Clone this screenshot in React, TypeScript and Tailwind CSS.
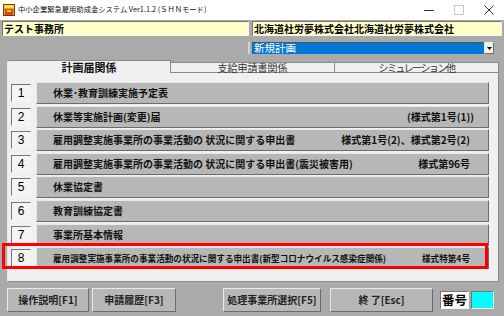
import React from "react";

const raised =
  "border border-t-[#e9e9e9] border-l-[#e9e9e9] border-r-[#6c6c6c] border-b-[#6c6c6c]";
const sunken =
  "border border-t-[#767676] border-l-[#767676] border-r-[#f6f6f6] border-b-[#f6f6f6]";

type RowData = { n: string; label: string; right?: string; small?: boolean; pr?: string };

const rows: RowData[] = [
  { n: "1", label: "休業･教育訓練実施予定表" },
  { n: "2", label: "休業等実施計画(変更)届", right: "(様式第1号(1))", pr: "pr-[14px]" },
  { n: "3", label: "雇用調整実施事業所の事業活動の 状況に関する申出書", right: "様式第1号(2)、様式第2号(2)" },
  { n: "4", label: "雇用調整実施事業所の事業活動の 状況に関する申出書(震災被害用)", right: "様式第96号" },
  { n: "5", label: "休業協定書" },
  { n: "6", label: "教育訓練協定書" },
  { n: "7", label: "事業所基本情報" },
  {
    n: "8",
    label: "雇用調整実施事業所の事業活動の状況に関する申出書(新型コロナウイルス感染症関係)",
    right: "様式特第4号",
    small: true,
  },
];

function Row({ r }: { r: RowData }) {
  return (
    <div className="flex items-center h-[22px]">
      <div
        className={`ml-[3px] w-[20px] h-[18px] bg-[#f4f4f4] ${sunken} flex items-center justify-center text-[12px] leading-none font-['Liberation_Sans',sans-serif]`}
      >
        {r.n}
      </div>
      <div
        className={`ml-[5px] w-[453px] h-[22px] bg-[#b7b7b7] ${raised} flex items-center justify-between pl-[16px] ${
          r.pr ?? "pr-[18px]"
        } font-bold leading-none text-[#111] ${r.small ? "text-[8.6px]" : "text-[10px]"}`}
      >
        <span className="whitespace-pre">{r.label}</span>
        {r.right && <span className="whitespace-pre">{r.right}</span>}
      </div>
    </div>
  );
}

function BottomButton({ w, ml, children }: { w: string; ml: string; children: React.ReactNode }) {
  return (
    <div
      className={`${w} ${ml} h-[24px] bg-[#b7b7b7] ${raised} flex items-center justify-center text-[10px] font-bold leading-none text-[#222] whitespace-pre`}
    >
      {children}
    </div>
  );
}

export default function App() {
  return (
    <div className="relative w-[504px] h-[316px] overflow-hidden bg-[#aaaaaa] font-['Noto_Sans_CJK_JP',sans-serif] text-black">
      {/* title bar */}
      <div className="h-[20px] bg-white flex items-center">
        <svg className="ml-[3px]" width="12" height="12" viewBox="0 0 12 12">
          <rect x="0.5" y="0.5" width="11" height="11" fill="#f2a020" stroke="#6b3a10" />
          <rect x="1" y="1" width="10" height="3" fill="#f6e040" />
          <rect x="2" y="5" width="8" height="6" fill="#d9480f" />
          <rect x="4" y="6" width="4" height="2" fill="#f8c060" />
        </svg>
        <span className="ml-[3px] text-[7.3px] leading-none text-[#111] whitespace-pre">
          中小企業緊急雇用助成金システム Ver1.1.2 (ＳＨＮモード)
        </span>
        <div className="ml-auto flex h-full">
          <div className="w-[30px] flex items-center justify-center">
            <svg width="10" height="10" viewBox="0 0 10 10">
              <line x1="0" y1="5.5" x2="10" y2="5.5" stroke="#333" strokeWidth="1" />
            </svg>
          </div>
          <div className="w-[30px] flex items-center justify-center">
            <svg width="10" height="10" viewBox="0 0 10 10">
              <rect x="0.5" y="0.5" width="9" height="9" fill="none" stroke="#c4c4c4" strokeWidth="1" />
            </svg>
          </div>
          <div className="w-[30px] flex items-center justify-center">
            <svg width="10" height="10" viewBox="0 0 10 10">
              <path d="M0.5 0.5 L9.5 9.5 M9.5 0.5 L0.5 9.5" stroke="#333" strokeWidth="1" />
            </svg>
          </div>
        </div>
      </div>

      {/* yellow fields */}
      <div className="mt-[1px] flex h-[15px]">
        <div
          className={`ml-[2px] w-[247px] bg-[#ffffc8] ${sunken} flex items-center pl-[1px] text-[10px] font-bold leading-none`}
        >
          テスト事務所
        </div>
        <div
          className={`ml-[3px] w-[250px] bg-[#ffffc8] ${sunken} flex items-center pl-[1px] text-[10px] font-bold leading-none`}
        >
          北海道社労夢株式会社北海道社労夢株式会社
        </div>
      </div>

      {/* dropdown */}
      <div className="mt-[6px] flex h-[12px]">
        <div className="ml-[248px] w-[2px] bg-[#d4d4d4]" />
        <div className="ml-[2px] w-[232px] bg-[#0078d7] border-t border-l border-t-[#555] border-l-[#555] flex items-center pl-[1px] text-white text-[10.5px] leading-none">
          新規計画
        </div>
        <div className={`w-[10px] bg-[#f0f0f0] ${raised} flex items-center justify-center`}>
          <svg width="5" height="3" viewBox="0 0 5 3">
            <path d="M0 0 L5 0 L2.5 3 Z" fill="#000" />
          </svg>
        </div>
      </div>

      {/* tabs */}
      <div className="mt-[6px] ml-[7px] w-[492px] h-[12px] flex items-end">
        <div className="relative z-10 w-[164px] h-[13px] -mb-[1px] bg-[#f0f0f0] border-t border-l border-r border-t-[#8a8a8a] border-l-[#e6e6e6] border-r-[#8a8a8a] rounded-tl-[2px] flex items-center justify-center text-[11px] font-bold leading-none text-[#111]">
          計画届関係
        </div>
        <div className="w-[164px] h-[10px] bg-[#f0f0f0] border-t border-r border-[#8a8a8a] flex items-center justify-center text-[10px] leading-none text-[#333]">
          支給申請書関係
        </div>
        <div className="w-[164px] h-[10px] bg-[#f0f0f0] border-t border-r border-[#8a8a8a] rounded-tr-[2px] flex items-center justify-center text-[10px] leading-none tracking-[-1.5px] text-[#333]">
          シミュレーション他
        </div>
      </div>

      {/* panel */}
      <div className="ml-[7px] w-[492px] h-[210px] bg-[#f0f0f0] border border-t-[#8a8a8a] border-l-[#e6e6e6] border-r-[#8a8a8a] border-b-[#8a8a8a] pt-[9px] flex flex-col gap-[1.6px]">
        {rows.map((r) => (
          <Row key={r.n} r={r} />
        ))}
      </div>

      {/* bottom buttons */}
      <div className="mt-[6px] flex items-center h-[24px]">
        <BottomButton w="w-[82px]" ml="ml-[7px]">操作説明[F1]</BottomButton>
        <BottomButton w="w-[84px]" ml="ml-[3px]">申請履歴[F3]</BottomButton>
        <BottomButton w="w-[98px]" ml="ml-[47px]">処理事業所選択[F5]</BottomButton>
        <BottomButton w="w-[103px]" ml="ml-[9px]">終 了[Esc]</BottomButton>
        <div
          className={`ml-[7px] w-[29px] h-[18px] bg-white ${sunken} flex items-center justify-center text-[12.5px] font-bold leading-none`}
        >
          番号
        </div>
        <div className={`ml-[2px] w-[23px] h-[18px] bg-[#00ffff] ${sunken}`} />
      </div>

      {/* red highlight annotation */}
      <div className="absolute left-[2px] top-[243px] w-[486px] h-[26px] border-[3px] border-[#ff0000]" />
    </div>
  );
}
